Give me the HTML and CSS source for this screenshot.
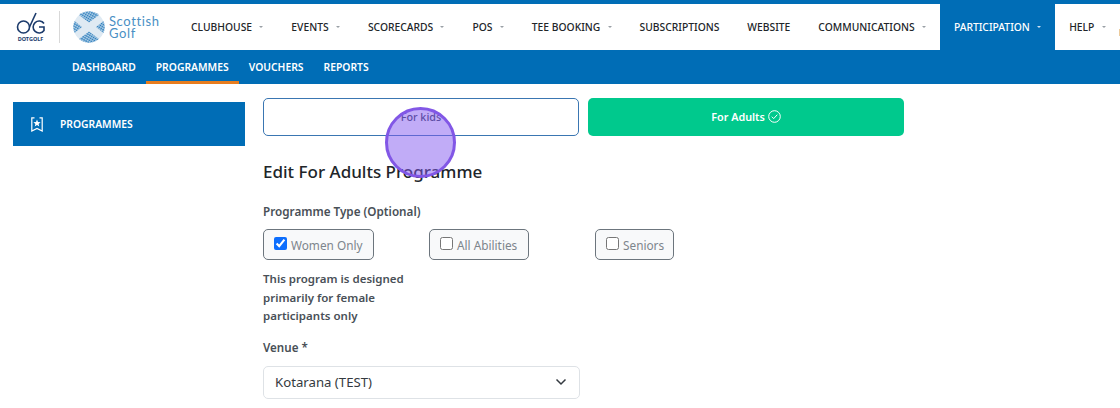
FILE: index.html
```html
<!DOCTYPE html>
<html lang="en">
<head>
<meta charset="utf-8">
<title>Programmes</title>
<link rel="stylesheet" href="styles.css">
</head>
<body>
<header class="topbar">
  <div class="brand">
    <div class="dotgolf">
      <svg class="dg-mark" width="30" height="24" viewBox="0 0 30 24" fill="none" stroke="#1b3a6b" stroke-width="1.6">
        <circle cx="7.500" cy="15" r="6"/>
        <path d="M13.500 15 L20 1"/>
        <path d="M28 11.500 A6 6 0 1 0 28 18.500 V15 H23"/>
      </svg>
      <span class="dg-text">DOTGOLF</span>
    </div>
    <span class="brand-sep"></span>
    <svg class="sg-mark" width="32" height="32" viewBox="0 0 32 32">
      <defs>
        <pattern id="dots" width="2.300" height="2.300" patternUnits="userSpaceOnUse" patternTransform="rotate(30)">
          <circle cx="1.150" cy="1.150" r="1" fill="#2a7dbd"/>
        </pattern>
      </defs>
      <circle cx="16" cy="16" r="15.500" fill="#dfeaf3"/>
      <path d="M6 4 A15.500 15.500 0 0 1 26 4 L16 11.500 Z" fill="url(#dots)"/>
      <path d="M6 28 A15.500 15.500 0 0 0 26 28 L16 20.500 Z" fill="url(#dots)"/>
      <path d="M1.500 10 A15.500 15.500 0 0 0 1.500 22 L9 16 Z" fill="url(#dots)"/>
      <path d="M30.500 10 A15.500 15.500 0 0 1 30.500 22 L23 16 Z" fill="url(#dots)"/>
    </svg>
    <div class="sg-text">Scottish<br>Golf</div>
  </div>
  <nav class="mainnav">
    <a class="mainlink">CLUBHOUSE<i class="caret"></i></a>
    <a class="mainlink">EVENTS<i class="caret"></i></a>
    <a class="mainlink">SCORECARDS<i class="caret"></i></a>
    <a class="mainlink">POS<i class="caret"></i></a>
    <a class="mainlink">TEE BOOKING<i class="caret"></i></a>
    <a class="mainlink">SUBSCRIPTIONS</a>
    <a class="mainlink">WEBSITE</a>
    <a class="mainlink">COMMUNICATIONS<i class="caret"></i></a>
    <a class="mainlink active">PARTICIPATION<i class="caret"></i></a>
    <a class="mainlink">HELP<i class="caret"></i></a>
  </nav>
  <span class="edge-mark"></span>
</header>
<nav class="subnav">
  <a class="sublink">DASHBOARD</a>
  <a class="sublink current">PROGRAMMES</a>
  <a class="sublink">VOUCHERS</a>
  <a class="sublink">REPORTS</a>
</nav>
<div class="page">
  <aside class="sidebar">
    <div class="sideitem">
      <svg width="12" height="15" viewBox="0 0 12 15" fill="none" stroke="#fff" stroke-width="1.200">
        <path d="M3.500 0.800 H0.800 V14 L6 11.500 L11.200 14 V0.800 H8.500"/>
        <path d="M6 2.500 L7 5 L9.600 5.200 L7.600 6.900 L8.300 9.400 L6 8 L3.700 9.400 L4.400 6.900 L2.400 5.200 L5 5 Z" fill="#fff" stroke="none"/>
      </svg>
      <span>PROGRAMMES</span>
    </div>
  </aside>
  <main class="content">
    <div class="tabs">
      <div class="tab tab-kids">For kids</div>
      <div class="tab tab-adults">For Adults
        <svg width="13" height="13" viewBox="0 0 13 13" fill="none" stroke="#fff" stroke-width="1">
          <circle cx="6.500" cy="6.500" r="5.800"/>
          <path d="M3.800 6.700 L5.700 8.600 L9.300 4.700"/>
        </svg>
      </div>
    </div>
    <h1 class="title">Edit For Adults Programme</h1>
    <div class="label">Programme Type (Optional)</div>
    <div class="types">
      <label class="type type-women"><input type="checkbox" checked>Women Only</label>
      <label class="type type-all"><input type="checkbox">All Abilities</label>
      <label class="type type-seniors"><input type="checkbox">Seniors</label>
    </div>
    <p class="hint">This program is designed primarily for female participants only</p>
    <div class="label venue-label">Venue *</div>
    <div class="select">
      <span>Kotarana (TEST)</span>
      <svg width="12" height="8" viewBox="0 0 12 8" fill="none" stroke="#343a40" stroke-width="1.500"><path d="M1.500 1.500 L6 6 L10.500 1.500"/></svg>
    </div>
  </main>
</div>
<div class="pointer"></div>
</body>
</html>
```
FILE: styles.css
```css
* { box-sizing: border-box; }
html, body { margin: 0; padding: 0; }
body {
  width: 1120px;
  height: 408px;
  overflow: hidden;
  background: #fff;
  font-family: "Noto Sans", "Open Sans", sans-serif;
  position: relative;
}
.topbar {
  height: 50px;
  background: #fff;
  border-top: 4px solid #006db6;
  display: flex;
  align-items: stretch;
  white-space: nowrap;
  position: relative;
}
.edge-mark {
  position: absolute;
  right: 0;
  top: 25px;
  width: 1px;
  height: 7px;
  background: #eccb9c;
}
.brand {
  width: 177px;
  flex: none;
  display: flex;
  align-items: center;
  padding-left: 16px;
}
.dotgolf { width: 29px; display: flex; flex-direction: column; align-items: center; }
.dg-text { font-size: 5.500px; font-weight: 700; color: #1b3a6b; line-height: 6px; }
.brand-sep { width: 1px; height: 32px; background: #d8d8d8; margin: 0 13px 0 14px; }
.sg-text { font-family: "Lato", sans-serif; font-size: 13px; line-height: 12px; letter-spacing: 0.600px; color: #4a90c4; margin-left: 4px; }
.mainnav { display: flex; align-items: stretch; }
.mainlink {
  display: flex;
  align-items: center;
  font-size: 10.300px;
  font-weight: 500;
  color: #212529;
  padding: 0 14px;
}
.mainlink.active { background: #006db6; color: #fff; margin-top: -4px; padding-top: 4px; }
.caret {
  width: 0;
  height: 0;
  margin-left: 7.300px;
  border-left: 2.500px solid transparent;
  border-right: 2.500px solid transparent;
  border-top: 2.500px solid #9aa0a6;
}
.active .caret { border-top-color: #cfe2f3; }
.subnav {
  height: 34px;
  background: #006db6;
  display: flex;
  padding-left: 62px;
}
.sublink {
  display: flex;
  align-items: center;
  padding: 0 10px;
  color: #fff;
  font-size: 10.350px;
  font-weight: 600;
}
.sublink.current { border-bottom: 3px solid #e87d1e; padding-top: 3px; }
.page { display: flex; padding-left: 13px; }
.sidebar { width: 232px; flex: none; padding-top: 18px; }
.sideitem {
  height: 44px;
  background: #006db6;
  color: #fff;
  display: flex;
  align-items: center;
  gap: 17px;
  padding-left: 18px;
  font-size: 10.300px;
  font-weight: 600;
}
.content { margin-left: 18px; padding-top: 14px; }
.tabs { display: flex; gap: 9px; }
.tab {
  width: 316px;
  height: 38px;
  border-radius: 5px;
  font-size: 10.800px;
  font-weight: 600;
  display: flex;
  align-items: center;
  justify-content: center;
  gap: 3px;
}
.tab-kids { border: 1px solid #3a76b2; color: #35405a; padding-bottom: 2px; font-weight: 500; }
.tab-adults { background: #00c98d; color: #fff; padding-bottom: 1px; }
.title { margin: 24px 0 0; font-size: 17px; line-height: 24px; font-weight: 500; color: #212529; }
.label { font-size: 11.700px; font-weight: 600; line-height: 18px; color: #495057; }
.title + .label { margin-top: 18px; }
.types { display: flex; margin-top: 9px; }
.type {
  height: 31px;
  border: 1px solid #6c757d;
  border-radius: 5px;
  background: #f8f9fa;
  display: flex;
  align-items: center;
  padding: 0 10px;
  font-size: 11.800px;
  color: #7d858c;
  white-space: nowrap;
}
.type input { margin: 0 4px 3px 0; width: 13px; height: 13px; accent-color: #0d6efd; }
.type-women { width: 111px; }
.type-all { width: 100px; margin-left: 55px; }
.type-seniors { width: 79px; margin-left: 66px; }
.hint {
  margin: 10px 0 0;
  width: 160px;
  font-size: 11.500px;
  font-weight: 600;
  line-height: 18.500px;
  color: #495057;
}
.venue-label { margin-top: 13px; font-size: 11.600px; }
.select {
  width: 317px;
  height: 33px;
  margin-top: 9px;
  border: 1px solid #dee2e6;
  border-radius: 5px;
  display: flex;
  align-items: center;
  justify-content: space-between;
  padding: 0 12px 0 11px;
  font-size: 13.200px;
  color: #343a40;
}
.pointer {
  position: absolute;
  left: 385px;
  top: 107px;
  width: 71px;
  height: 71px;
  border-radius: 50%;
  background: rgba(132, 90, 240, 0.5);
  border: 3px solid #8257e6;
}
```
